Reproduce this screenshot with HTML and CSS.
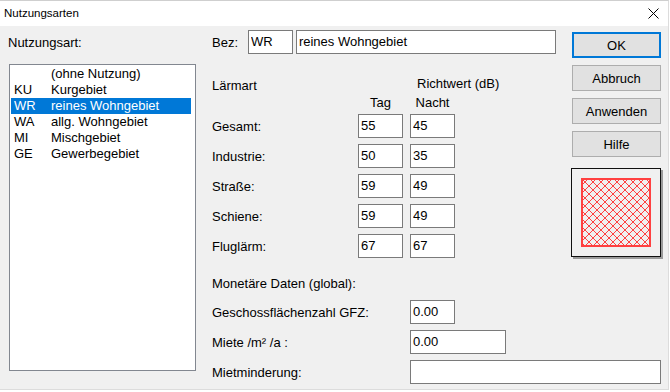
FILE: index.html
```html
<!DOCTYPE html>
<html lang="de">
<head>
<meta charset="utf-8">
<title>Nutzungsarten</title>
<link rel="stylesheet" href="styles.css">
</head>
<body>
<div class="window">
  <div class="titlebar">
    <span class="title">Nutzungsarten</span>
    <svg class="close" width="11" height="11" viewBox="0 0 11 11"><path d="M0.5 0.5L10.5 10.5M10.5 0.5L0.5 10.5" stroke="#000" stroke-width="1" fill="none"/></svg>
  </div>
  <div class="content">
    <div class="left">
      <div class="label first-label">Nutzungsart:</div>
      <div class="listbox">
        <div class="item"><span class="code"></span><span class="name">(ohne Nutzung)</span></div>
        <div class="item"><span class="code">KU</span><span class="name">Kurgebiet</span></div>
        <div class="item selected"><span class="code">WR</span><span class="name">reines Wohngebiet</span></div>
        <div class="item"><span class="code">WA</span><span class="name">allg. Wohngebiet</span></div>
        <div class="item"><span class="code">MI</span><span class="name">Mischgebiet</span></div>
        <div class="item"><span class="code">GE</span><span class="name">Gewerbegebiet</span></div>
      </div>
    </div>
    <div class="right">
      <div class="upper">
        <div class="form">
          <div class="bez-row">
            <span class="label bez-label">Bez:</span>
            <input class="field w-short" value="WR" readonly>
            <input class="field w-name" value="reines Wohngebiet" readonly>
          </div>
          <div class="laerm">
            <div class="lhead">
              <span class="label lh-art">Lärmart</span>
              <span class="label lh-richt">Richtwert (dB)</span>
            </div>
            <div class="lsub">
              <span class="label sub-col">Tag</span>
              <span class="label sub-col">Nacht</span>
            </div>
            <div class="lrow"><span class="label rlabel">Gesamt:</span><input class="field w-short" value="55" readonly><input class="field w-short" value="45" readonly></div>
            <div class="lrow"><span class="label rlabel">Industrie:</span><input class="field w-short" value="50" readonly><input class="field w-short" value="35" readonly></div>
            <div class="lrow"><span class="label rlabel">Straße:</span><input class="field w-short" value="59" readonly><input class="field w-short" value="49" readonly></div>
            <div class="lrow"><span class="label rlabel">Schiene:</span><input class="field w-short" value="59" readonly><input class="field w-short" value="49" readonly></div>
            <div class="lrow"><span class="label rlabel">Fluglärm:</span><input class="field w-short" value="67" readonly><input class="field w-short" value="67" readonly></div>
          </div>
        </div>
        <div class="buttons">
          <button class="btn default">OK</button>
          <button class="btn">Abbruch</button>
          <button class="btn">Anwenden</button>
          <button class="btn">Hilfe</button>
          <div class="swatch">
            <svg class="hatch" width="70" height="69" viewBox="0 0 70 69" shape-rendering="crispEdges">
              <defs>
                <pattern id="diagcross" width="8" height="8" patternUnits="userSpaceOnUse">
                  <g fill="#ff4040">
                    <rect x="0" y="0" width="1" height="1"/><rect x="1" y="1" width="1" height="1"/>
                    <rect x="2" y="2" width="1" height="1"/><rect x="3" y="3" width="1" height="1"/>
                    <rect x="4" y="4" width="1" height="1"/><rect x="5" y="5" width="1" height="1"/>
                    <rect x="6" y="6" width="1" height="1"/><rect x="7" y="7" width="1" height="1"/>
                    <rect x="7" y="0" width="1" height="1"/><rect x="6" y="1" width="1" height="1"/>
                    <rect x="5" y="2" width="1" height="1"/><rect x="4" y="3" width="1" height="1"/>
                    <rect x="3" y="4" width="1" height="1"/><rect x="2" y="5" width="1" height="1"/>
                    <rect x="1" y="6" width="1" height="1"/><rect x="0" y="7" width="1" height="1"/>
                  </g>
                </pattern>
              </defs>
              <rect x="0" y="0" width="70" height="69" fill="#f0f0f0"/>
              <rect x="0" y="0" width="70" height="69" fill="url(#diagcross)"/>
              <rect x="1" y="1" width="68" height="67" fill="none" stroke="#ff4040" stroke-width="2"/>
            </svg>
          </div>
        </div>
      </div>
      <div class="monetary">
        <div class="label mhead">Monetäre Daten (global):</div>
        <div class="mrow"><span class="label mlabel">Geschossflächenzahl GFZ:</span><input class="field w-short" value="0.00" readonly></div>
        <div class="mrow"><span class="label mlabel">Miete /m² /a :</span><input class="field w-mid" value="0.00" readonly></div>
        <div class="mrow"><span class="label mlabel">Mietminderung:</span><input class="field w-long" value="" readonly></div>
      </div>
    </div>
  </div>
</div>
</body>
</html>
```
FILE: styles.css
```css
* { box-sizing: border-box; }
html, body { margin: 0; padding: 0; }
body {
  width: 670px;
  height: 392px;
  background: #ffffff;
  font-family: "Liberation Sans", Arial, sans-serif;
  font-size: 13px;
  color: #000;
  overflow: hidden;
}
.window {
  width: 669px;
  height: 390px;
  border-top: 1px solid #cfcfcf;
  border-right: 1px solid #dcdcdc;
  border-bottom: 1px solid #dcdcdc;
  background: #f0f0f0;
  display: flex;
  flex-direction: column;
}
.titlebar {
  height: 25px;
  background: #fff;
  display: flex;
  align-items: center;
  justify-content: space-between;
  padding: 0 9px 0 4px;
}
.title {
  font-size: 11.5px;
  line-height: 14px;
  padding-bottom: 1px;
}
.close { display: block; margin-top: -1px; }
.content {
  flex: 1;
  display: flex;
  padding: 0 0 0 8px;
}
.label {
  line-height: 16px;
  white-space: nowrap;
}
.left {
  width: 189px;
  margin-right: 15px;
  padding-top: 9px;
}
.listbox {
  margin-top: 13px;
  margin-left: 1px;
  width: 187px;
  height: 307px;
  background: #fff;
  border: 1px solid #828790;
  padding-top: 1px;
}
.item {
  display: flex;
  height: 16px;
  line-height: 16px;
  margin: 0 4px 0 1px;
  padding-left: 3px;
}
.item .code { width: 37px; }
.item.selected { background: #0078d7; color: #fff; }
.right {
  width: 449px;
  display: flex;
  flex-direction: column;
}
.upper {
  display: flex;
  align-items: flex-start;
}
.form {
  width: 344px;
  margin-right: 15px;
  padding-top: 4px;
}
.field {
  display: block;
  height: 24px;
  border: 1px solid #7a7a7a;
  background: #fff;
  font-family: "Liberation Sans", Arial, sans-serif;
  font-size: 13px;
  color: #000;
  padding: 0 2px 2px 2px;
  margin: 0;
  outline: none;
  border-radius: 0;
}
.w-short { width: 45px; }
.w-name { width: 261px; }
.w-mid { width: 96px; }
.w-long { width: 252px; }
.bez-row {
  display: flex;
  align-items: center;
}
.bez-label { width: 36px; padding-top: 1px; }
.bez-row .w-short { margin-right: 3px; }
.laerm { margin-top: 22px; }
.lhead {
  display: flex;
  height: 16px;
}
.lh-art { width: 205px; margin-top: 2px; }
.lh-richt { }
.lsub {
  display: flex;
  margin-top: 3px;
  padding-left: 146px;
}
.sub-col {
  width: 45px;
  text-align: center;
}
.sub-col + .sub-col { margin-left: 7px; }
.lrow {
  display: flex;
  align-items: center;
  margin-top: 6px;
}
.lsub + .lrow { margin-top: 3px; }
.rlabel { width: 146px; padding-top: 2px; }
.lrow .field + .field { margin-left: 7px; }
.buttons {
  width: 90px;
  padding-top: 6px;
  display: flex;
  flex-direction: column;
}
.btn {
  width: 89px;
  height: 26px;
  margin: 0 0 7px 1px;
  background: #e1e1e1;
  border: 1px solid #adadad;
  font-family: "Liberation Sans", Arial, sans-serif;
  font-size: 13px;
  color: #000;
  padding: 0;
  border-radius: 0;
}
.btn.default { border: 2px solid #0078d7; }
.swatch {
  margin-top: 4px;
  width: 90px;
  height: 89px;
  border: 1px solid #101010;
  box-shadow: 2px 2px 0 #9a9a9a;
  background: #f0f0f0;
  display: flex;
  align-items: center;
  justify-content: center;
  padding: 0 1px 1px 0;
}
.hatch { display: block; }
.monetary {
  margin-top: 18px;
}
.mhead { }
.mrow {
  display: flex;
  align-items: center;
  margin-top: 6px;
}
.mhead + .mrow { margin-top: 8px; }
.mlabel { width: 198px; padding-top: 2px; }
```
